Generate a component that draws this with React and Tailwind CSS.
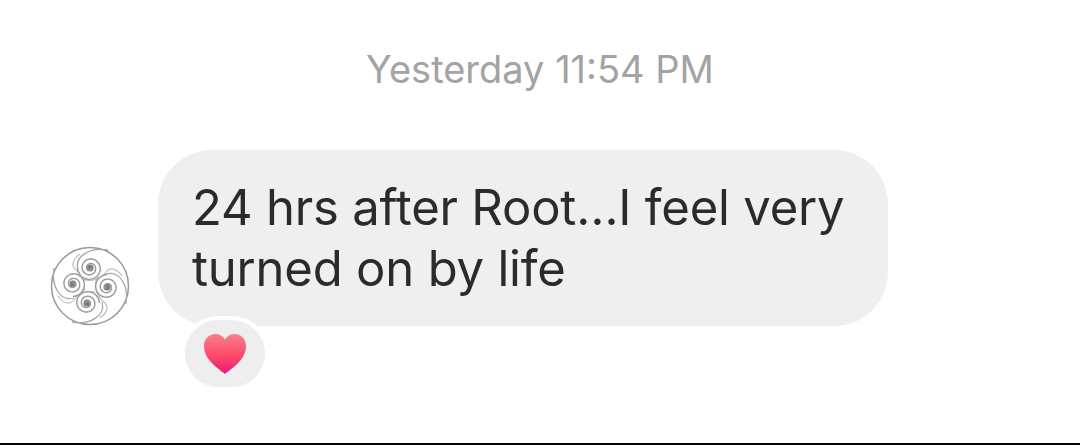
import React from 'react';

const spiral = (cx, cy, rot) => {
  let d = '';
  for (let i = 0; i <= 70; i++) {
    const a = (i / 70) * Math.PI * 5 + rot;
    const r = 1 + (i / 70) * 11.5;
    d += `${i === 0 ? 'M' : 'L'}${(cx + r * Math.cos(a)).toFixed(2)} ${(cy + r * Math.sin(a)).toFixed(2)} `;
  }
  return d;
};

const Avatar = () => {
  const arms = [
    { cx: 40, cy: 22, rot: 0 },
    { cx: 57, cy: 41, rot: 1.57 },
    { cx: 37, cy: 57, rot: 3.14 },
    { cx: 23, cy: 38, rot: 4.71 },
  ];
  return (
    <svg width="80" height="80" viewBox="0 0 80 80" fill="none" className="shrink-0 blur-[0.7px]">
      <circle cx="40" cy="40" r="38.5" stroke="#9a9a9a" strokeWidth="1.5" />
      {arms.map((a, i) => (
        <g key={i} transform={`rotate(${i * 90} 40 40)`}>
          <path d="M28 24 C24 10 40 1 58 4" stroke="#a8a8a8" strokeWidth="1.3" />
          <path d="M30 32 C38 37 50 34 56 26 C60 21 66 22 72 30" stroke="#c0c0c0" strokeWidth="1.2" />
          <path d="M33 28 C38 31 46 30 52 24" stroke="#cccccc" strokeWidth="1" />
        </g>
      ))}
      {arms.map((a, i) => (
        <g key={i}>
          <circle cx={a.cx} cy={a.cy} r="11.5" fill="#fff" />
          <circle cx={a.cx} cy={a.cy} r="3.5" fill="#7d7d7d" />
          <path d={spiral(a.cx, a.cy, a.rot)} stroke="#999999" strokeWidth="1.4" />
        </g>
      ))}
    </svg>
  );
};

const Heart = () => (
  <svg width="44" height="42" viewBox="0 0 44 42" className="blur-[0.4px]">
    <defs>
      <linearGradient id="heart" x1="0" y1="0" x2="0" y2="1">
        <stop offset="0" stopColor="#fb7f8c" />
        <stop offset="0.55" stopColor="#fb4a68" />
        <stop offset="1" stopColor="#e8177f" />
      </linearGradient>
    </defs>
    <path
      d="M22 41 C15 35 1 27 1 13 C1 5.5 6.5 1 12.5 1 C16.5 1 20 3 22 6.5 C24 3 27.5 1 31.5 1 C37.5 1 43 5.5 43 13 C43 27 29 35 22 41 Z"
      fill="url(#heart)"
    />
  </svg>
);

const App = () => {
  return (
    <div className="h-[445px] w-[1080px] bg-white border-b-2 border-black flex flex-col overflow-hidden font-['Inter',sans-serif]">
      <div className="mt-[45px] text-center text-[38px] leading-[48px] text-[#a3a3a3]">Yesterday 11:54 PM</div>

      <div className="mt-[57px] ml-[50px] flex items-end gap-[28px]">
        <Avatar />
        <div className="w-[730px] h-[176px] rounded-[54px] bg-[#efefef] pl-[34px] pt-[27px] text-[49px] leading-[61px] tracking-[-0.2px] text-[#2b2b2b]">
          24 hrs after Root…I feel very
          <br />
          turned on by life
        </div>
      </div>

      <div className="ml-[181px] -mt-[10px] relative w-[88px] h-[75px] rounded-full bg-[#eeeeee] border-4 border-white flex items-center justify-center">
        <Heart />
      </div>
    </div>
  );
};

export default App;
